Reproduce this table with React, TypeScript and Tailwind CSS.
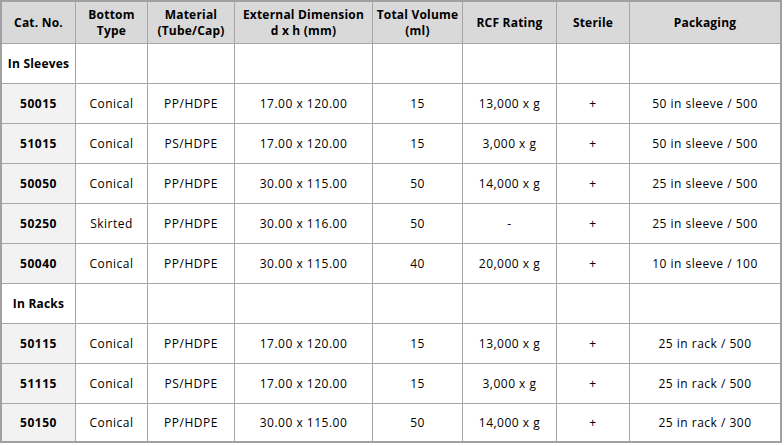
const headers = [
  ["Cat. No."],
  ["Bottom", "Type"],
  ["Material", "(Tube/Cap)"],
  ["External Dimension", "d x h (mm)"],
  ["Total Volume", "(ml)"],
  ["RCF Rating"],
  ["Sterile"],
  ["Packaging"],
];

type Row =
  | { group: string }
  | { cells: [string, string, string, string, string, string, string, string] };

const rows: Row[] = [
  { group: "In Sleeves" },
  { cells: ["50015", "Conical", "PP/HDPE", "17.00 x 120.00", "15", "13,000 x g", "+", "50 in sleeve / 500"] },
  { cells: ["51015", "Conical", "PS/HDPE", "17.00 x 120.00", "15", "3,000 x g", "+", "50 in sleeve / 500"] },
  { cells: ["50050", "Conical", "PP/HDPE", "30.00 x 115.00", "50", "14,000 x g", "+", "25 in sleeve / 500"] },
  { cells: ["50250", "Skirted", "PP/HDPE", "30.00 x 116.00", "50", "-", "+", "25 in sleeve / 500"] },
  { cells: ["50040", "Conical", "PP/HDPE", "30.00 x 115.00", "40", "20,000 x g", "+", "10 in sleeve / 100"] },
  { group: "In Racks" },
  { cells: ["50115", "Conical", "PP/HDPE", "17.00 x 120.00", "15", "13,000 x g", "+", "25 in rack / 500"] },
  { cells: ["51115", "Conical", "PS/HDPE", "17.00 x 120.00", "15", "3,000 x g", "+", "25 in rack / 500"] },
  { cells: ["50150", "Conical", "PP/HDPE", "30.00 x 115.00", "50", "14,000 x g", "+", "25 in rack / 300"] },
];

const Cell = ({
  children,
  col,
  last,
  className = "",
}: {
  children?: React.ReactNode;
  col: number;
  last: boolean;
  className?: string;
}) => (
  <div
    className={`flex items-center justify-center text-center border-[#a6a6a6] ${
      col < 7 ? "border-r" : ""
    } ${last ? "" : "border-b"} ${className}`}
  >
    {children}
  </div>
);

export default function App() {
  return (
    <div className="bg-white w-[784px] h-[446px] font-['Open_Sans','Noto_Sans_CJK_KR',sans-serif] text-[12px] leading-[15px] text-black">
      <div className="w-[782px] border-2 border-[#a0a0a0] grid grid-cols-[74px_72px_87px_138px_90px_94px_73px_150px] grid-rows-[42px_repeat(9,40px)_37px]">
        {headers.map((h, i) => (
          <Cell
            key={i}
            col={i}
            last={false}
            className="bg-[#d9d9d9] font-bold flex-col leading-[16px] tracking-[0.2px]"
          >
            {h.map((line) => (
              <span key={line} className="whitespace-nowrap">
                {line}
              </span>
            ))}
          </Cell>
        ))}
        {rows.map((r, ri) => {
          const last = ri === rows.length - 1;
          if ("group" in r) {
            return [0, 1, 2, 3, 4, 5, 6, 7].map((c) => (
              <Cell
                key={`${ri}-${c}`}
                col={c}
                last={last}
                className={c === 0 ? "font-bold tracking-[0.2px] whitespace-nowrap" : ""}
              >
                {c === 0 ? r.group : null}
              </Cell>
            ));
          }
          return r.cells.map((v, c) => (
            <Cell
              key={`${ri}-${c}`}
              col={c}
              last={last}
              className={
                c === 0
                  ? "bg-[#f2f2f2] font-bold tracking-[0.5px]"
                  : "tracking-[0.5px] whitespace-nowrap"
              }
            >
              {v}
            </Cell>
          ));
        })}
      </div>
    </div>
  );
}
